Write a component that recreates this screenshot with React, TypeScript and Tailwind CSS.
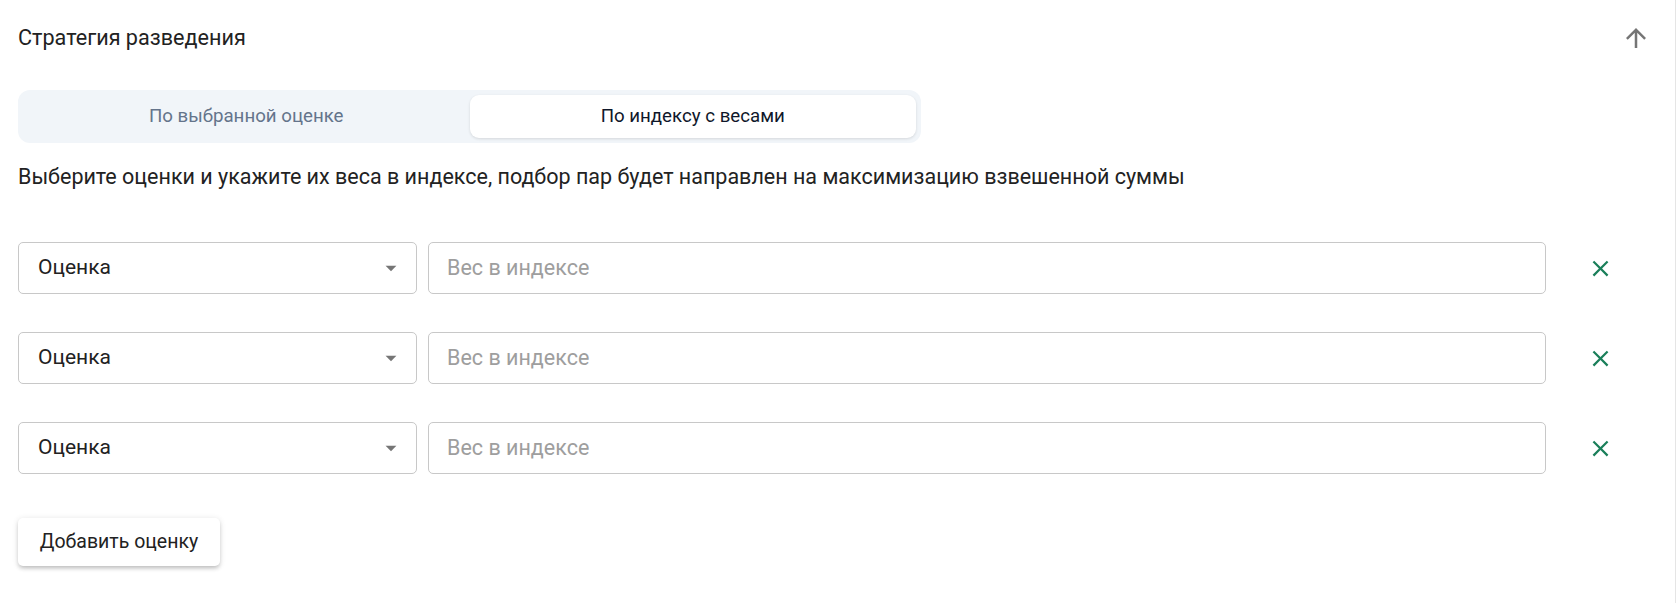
import React from "react";

const ArrowUp = () => (
  <svg width="30" height="30" viewBox="0 0 24 24" fill="#757575">
    <path d="M4 12l1.41 1.41L11 7.83V20h2V7.83l5.58 5.59L20 12l-8-8-8 8z" />
  </svg>
);

const CloseIcon = () => (
  <svg width="27" height="27" viewBox="0 0 24 24" fill="#1a7f5a">
    <path d="M19 6.41 17.59 5 12 10.59 6.41 5 5 6.41 10.59 12 5 17.59 6.41 19 12 13.41 17.59 19 19 17.59 13.41 12z" />
  </svg>
);

const Caret = () => (
  <svg width="26" height="26" viewBox="0 0 24 24" fill="#757575">
    <path d="M7 10l5 5 5-5z" />
  </svg>
);

function Row() {
  return (
    <div className="flex items-center h-[52px]">
      <div className="w-[399px] h-[52px] shrink-0 border border-[#c8c8c8] rounded-[5px] flex items-center justify-between pl-[19px] pr-[12px] bg-white">
        <span className="text-[21px] text-[#222]">Оценка</span>
        <Caret />
      </div>
      <div className="ml-[11px] w-[1118px] h-[52px] shrink-0 border border-[#c8c8c8] rounded-[5px] flex items-center pl-[18px] bg-white">
        <span className="text-[21.5px] text-[#9e9e9e]">Вес в индексе</span>
      </div>
      <div className="w-[108px] shrink-0 flex justify-center items-center">
        <CloseIcon />
      </div>
    </div>
  );
}

export default function App() {
  return (
    <div
      className="w-[1676px] h-[603px] bg-white border-r border-[#e5e5e5] pl-[18px] pt-[23px]"
      style={{ fontFamily: "Roboto, 'Noto Sans', sans-serif" }}
    >
      <div className="flex items-center justify-between h-[29px] pr-[24px]">
        <span className="text-[21.6px] text-[#222] leading-[28px]">Стратегия разведения</span>
        <ArrowUp />
      </div>
      <div className="mt-[38px] w-[903px] h-[53px] bg-[#f1f5f9] rounded-[12px] p-[5px] flex">
        <div className="flex-1 flex items-center justify-center text-[18.7px] text-[#64748b]">
          По выбранной оценке
        </div>
        <div className="flex-1 flex items-center justify-center text-[18.7px] text-[#0f172a] bg-white rounded-[9px] shadow-[0_1px_3px_rgba(0,0,0,0.12)]">
          По индексу с весами
        </div>
      </div>
      <div className="mt-[20px] text-[21.5px] leading-[28px] text-[#222]">
        Выберите оценки и укажите их веса в индексе, подбор пар будет направлен на максимизацию взвешенной суммы
      </div>
      <div className="mt-[51px] flex flex-col gap-[38px]">
        <Row />
        <Row />
        <Row />
      </div>
      <button className="mt-[44px] w-[202px] h-[48px] bg-white rounded-[5px] text-[19.5px] text-[#222] shadow-[0_3px_4px_-1px_rgba(0,0,0,0.2),0_1px_6px_0_rgba(0,0,0,0.12)]">
        Добавить оценку
      </button>
    </div>
  );
}
